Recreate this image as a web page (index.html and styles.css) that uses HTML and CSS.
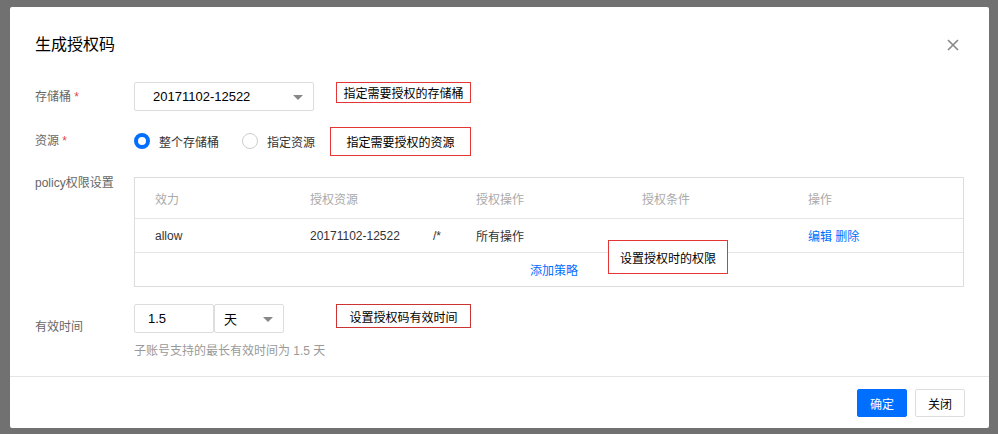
FILE: index.html
```html
<!DOCTYPE html>
<html lang="zh-CN">
<head>
    <meta charset="UTF-8">
    <title>生成授权码</title>
    <link rel="stylesheet" href="styles.css">
</head>
<body>

    <div class="dialog">
        <!-- Header -->
        <div class="dialog-header">
            <h3 class="dialog-title">生成授权码</h3>
            <span class="dialog-close">
                <svg width="12" height="12" viewBox="0 0 12 12"><path d="M1 1L11 11M11 1L1 11" stroke="#888" stroke-width="1.6" fill="none"/></svg>
            </span>
        </div>

        <div class="dialog-body">
            <!-- Bucket -->
            <div class="form-row row-bucket">
                <div class="form-label">存储桶 <span class="required">*</span></div>
                <div class="select bucket-select">
                    <span>20171102-12522</span>
                    <span class="caret"></span>
                </div>
                <div class="note note-bucket">指定需要授权的存储桶</div>
            </div>

            <!-- Resource -->
            <div class="form-row row-resource">
                <div class="form-label">资源 <span class="required">*</span></div>
                <label class="radio"><span class="radio-dot checked"></span>整个存储桶</label>
                <label class="radio"><span class="radio-dot"></span>指定资源</label>
                <div class="note note-resource">指定需要授权的资源</div>
            </div>

            <!-- Policy -->
            <div class="form-row row-policy">
                <div class="form-label">policy权限设置</div>
                <div class="policy-table">
                    <div class="tr th">
                        <div>效力</div>
                        <div>授权资源</div>
                        <div>授权操作</div>
                        <div>授权条件</div>
                        <div>操作</div>
                    </div>
                    <div class="tr td">
                        <div>allow</div>
                        <div>20171102-12522<span class="path">/*</span></div>
                        <div>所有操作</div>
                        <div></div>
                        <div><a href="#">编辑</a> <a href="#">删除</a></div>
                    </div>
                    <div class="add-row"><a href="#">添加策略</a></div>
                    <div class="note note-policy">设置授权时的权限</div>
                </div>
            </div>

            <!-- Expire -->
            <div class="form-row row-expire">
                <div class="form-label">有效时间</div>
                <div class="expire-box">
                    <div class="expire-inputs">
                        <div class="input">1.5</div>
                        <div class="select unit-select">
                            <span>天</span>
                            <span class="caret"></span>
                        </div>
                    </div>
                    <div class="hint">子账号支持的最长有效时间为 1.5 天</div>
                </div>
                <div class="note note-expire">设置授权码有效时间</div>
            </div>
        </div>

        <!-- Footer -->
        <div class="dialog-footer">
            <button class="btn btn-primary">确定</button>
            <button class="btn">关闭</button>
        </div>
    </div>

</body>
</html>
```

FILE: styles.css
```css
body {
    margin: 0;
    padding: 0;
    background: #717171;
    font-family: "Liberation Sans", Arial, "Noto Sans CJK SC", sans-serif;
    font-size: 12px;
    color: #333;
}

a {
    color: #006eff;
    text-decoration: none;
}

/* Dialog */
.dialog {
    width: 979px;
    height: 421px;
    margin: 7px 0 0 10px;
    background: #fff;
    border-radius: 2px;
    box-sizing: border-box;
    position: relative;
}

.dialog-header {
    height: 60px;
    padding: 26px 25px 0;
    box-sizing: border-box;
    display: flex;
    justify-content: space-between;
}

.dialog-title {
    margin: 0;
    font-size: 16px;
    font-weight: normal;
    line-height: 24px;
    color: #000;
}

.dialog-close {
    margin-top: 6px;
    margin-right: 5px;
    width: 12px;
    height: 12px;
    line-height: 0;
}

.dialog-body {
    padding: 15px 25px 0;
    height: 309px;
    box-sizing: border-box;
}

/* Form rows */
.form-row {
    display: flex;
    align-items: center;
}

.form-label {
    width: 99px;
    flex-shrink: 0;
    color: #666;
    line-height: 16px;
}

.required {
    color: #e54545;
}

.row-bucket {
    height: 29px;
}

.row-resource {
    margin-top: 15px;
    height: 30px;
}

.row-policy {
    margin-top: 21px;
    align-items: flex-start;
}

.row-policy .form-label {
    margin-top: -2px;
}

.row-expire {
    margin-top: 17px;
    align-items: flex-start;
}

.row-expire .form-label {
    padding-top: 15px;
}

/* Select / input */
.select,
.input {
    height: 29px;
    border: 1px solid #ddd;
    border-radius: 2px;
    box-sizing: border-box;
    display: flex;
    align-items: center;
    font-size: 13px;
    color: #000;
}

.bucket-select {
    width: 180px;
    padding: 0 10px 0 18px;
    justify-content: space-between;
}

.caret {
    width: 0;
    height: 0;
    border-left: 5px solid transparent;
    border-right: 5px solid transparent;
    border-top: 5px solid #888;
    margin-top: 1px;
}

.input {
    width: 80px;
    padding-left: 13px;
}

.unit-select {
    width: 70px;
    padding: 0 10px 0 9px;
    justify-content: space-between;
}

.expire-box {
    width: 150px;
    flex-shrink: 0;
}

.expire-inputs {
    display: flex;
}

.hint {
    margin-top: 10px;
    color: #999;
    line-height: 16px;
    white-space: nowrap;
}

/* Radio */
.radio {
    display: flex;
    align-items: center;
    color: #333;
}

.radio + .radio {
    margin-left: 23px;
}

.radio-dot {
    width: 16px;
    height: 16px;
    border: 1px solid #ccc;
    border-radius: 50%;
    box-sizing: border-box;
    margin-right: 9px;
}

.radio-dot.checked {
    border: 4px solid #006eff;
}

/* Policy table */
.policy-table {
    width: 831px;
    border: 1px solid #ddd;
    box-sizing: border-box;
    position: relative;
}

.tr {
    display: grid;
    grid-template-columns: 155px 166px 166px 166px 1fr;
    border-bottom: 1px solid #e5e5e5;
}

.tr div {
    padding-left: 20px;
}

.th {
    height: 40px;
    align-items: center;
    color: #aaa;
}

.td {
    height: 33px;
    align-items: center;
}

.path {
    margin-left: 33px;
}

.add-row {
    height: 33px;
    display: flex;
    align-items: center;
    justify-content: center;
    padding-left: 10px;
}

/* Annotation boxes */
.note {
    border: 1px solid #e53535;
    box-sizing: border-box;
    display: flex;
    align-items: center;
    justify-content: center;
    color: #000;
    background: #fff;
}

.note-bucket {
    width: 135px;
    height: 21px;
    margin-left: 22px;
    align-self: flex-start;
}

.note-resource {
    width: 141px;
    height: 29px;
    margin-left: 15px;
}

.note-policy {
    position: absolute;
    left: 473px;
    top: 62px;
    width: 120px;
    height: 34px;
}

.note-expire {
    width: 135px;
    height: 24px;
    margin-left: 52px;
    border-color: #c33;
}

/* Footer */
.dialog-footer {
    border-top: 1px solid #e5e5e5;
    padding: 12px 24px 0;
    display: flex;
    justify-content: flex-end;
    gap: 8px;
}

.btn {
    height: 28px;
    min-width: 49px;
    padding: 0 12px;
    border: 1px solid #ddd;
    border-radius: 2px;
    background: #fff;
    color: #000;
    font-family: inherit;
    font-size: 12px;
    cursor: pointer;
}

.btn-primary {
    width: 50px;
    background: #006eff;
    border-color: #006eff;
    color: #fff;
}
```
